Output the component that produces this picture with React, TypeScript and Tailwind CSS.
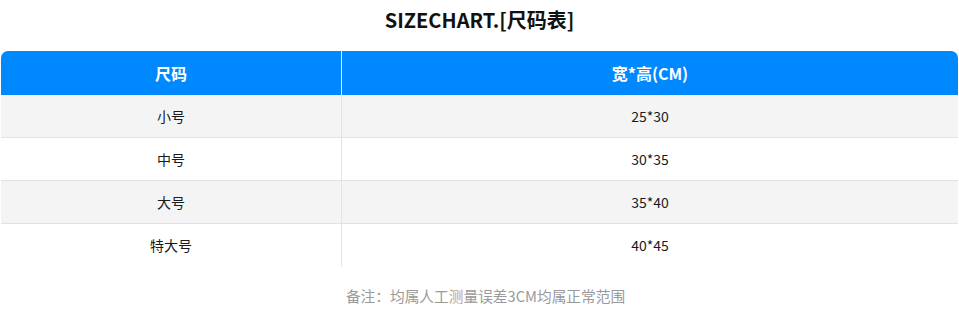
const rows = [
  { size: "小号", dim: "25*30" },
  { size: "中号", dim: "30*35" },
  { size: "大号", dim: "35*40" },
  { size: "特大号", dim: "40*45" },
];

export default function App() {
  return (
    <main
      className="w-[959px] h-[320px] bg-white"
      style={{ fontFamily: '"Noto Sans CJK SC", "Noto Sans", sans-serif' }}
    >
      <h1 className="pt-[6px] h-[51px] text-center text-[20px] leading-[28px] font-bold text-[#111]">
        SIZECHART.[尺码表]
      </h1>
      <div className="mx-px">
        {/* header */}
        <div className="flex h-[44px] bg-[#0088ff] rounded-t-[7px] text-white text-[16px] font-bold">
          <div className="w-[341px] flex items-center justify-center border-r border-[#e8f2ff]">尺码</div>
          <div className="flex-1 flex items-center justify-center">宽*高(CM)</div>
        </div>
        {rows.map((r, i) => (
          <div
            key={r.size}
            className={`flex h-[43px] text-[14px] text-[#1a1a1a] ${i % 2 === 0 ? "bg-[#f4f4f4]" : "bg-white"} ${i < rows.length - 1 ? "border-b border-[#e2e2e2]" : ""}`}
          >
            <div className="w-[341px] flex items-center justify-center border-r border-[#e4e4e4]">{r.size}</div>
            <div className="flex-1 flex items-center justify-center">{r.dim}</div>
          </div>
        ))}
      </div>
      <p className="mt-[18px] pl-[12px] text-center text-[14.7px] leading-[22px] text-[#9a9a9a]">
        备注：均属人工<span className="text-[#c9a27c]">测</span>量误差3CM均属正常范围
      </p>
    </main>
  );
}
